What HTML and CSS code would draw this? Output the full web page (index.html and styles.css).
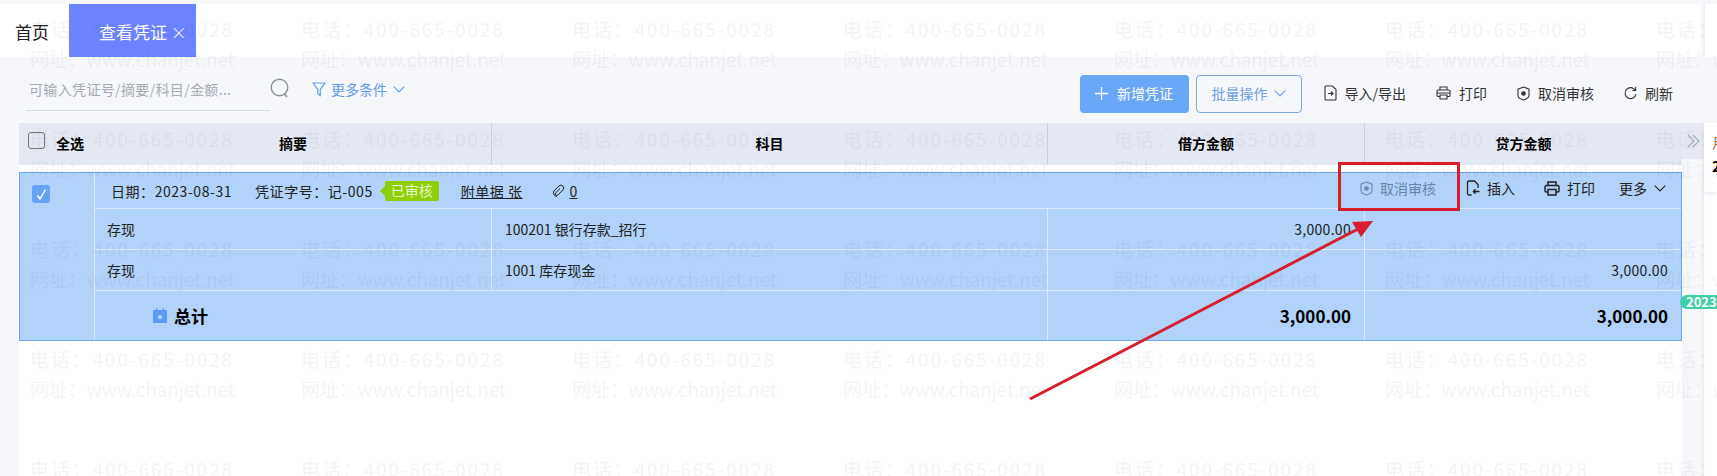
FILE: index.html
```html
<!DOCTYPE html>
<html lang="zh-CN">
<head>
    <meta charset="UTF-8">
    <title>查看凭证</title>
    <link rel="stylesheet" href="styles.css">
</head>
<body>
    <!-- 顶部页签 -->
    <div class="tabs">
        <div class="tab">首页</div>
        <div class="tab tab-active">查看凭证 <span class="tab-close">×</span></div>
    </div>

    <div class="main">
        <div class="content">
            <!-- 搜索和工具栏 -->
            <div class="toolbar">
                <div class="search">可输入凭证号/摘要/科目/金额...</div>
                <svg class="icon-search" viewBox="0 0 20 20" fill="none" stroke="currentColor" stroke-width="1.4"><circle cx="9.5" cy="9.5" r="8.3"/><path d="M14.5 16l2.5 3"/></svg>
                <div class="filter">
                    <svg width="14" height="15" viewBox="0 0 14 15" fill="none" stroke="currentColor" stroke-width="1.2"><path d="M1 1h12L8.3 7.4v6.4L5.7 11.6V7.4z" stroke-linejoin="round"/></svg>
                    <span>更多条件</span>
                    <svg width="12" height="7" viewBox="0 0 12 7" fill="none" stroke="currentColor" stroke-width="1.1"><path d="M.7.7 6 6l5.3-5.3"/></svg>
                </div>
                <div class="actions">
                    <button class="btn btn-primary"><svg width="13" height="13" viewBox="0 0 13 13" stroke="currentColor" stroke-width="1.3"><path d="M6.5 0v13M0 6.5h13"/></svg>新增凭证</button>
                    <button class="btn btn-outline">批量操作<svg width="12" height="7" viewBox="0 0 12 7" fill="none" stroke="currentColor" stroke-width="1.1"><path d="M.7.7 6 6l5.3-5.3"/></svg></button>
                    <div class="links">
                        <span class="link"><svg width="13" height="16" viewBox="0 0 13 16" fill="none" stroke="currentColor" stroke-width="1.1"><path d="M8.5 1H2a1 1 0 0 0-1 1v12a1 1 0 0 0 1 1h9a1 1 0 0 0 1-1V4.5zM4 8.5h5M7 6.5l2 2-2 2"/></svg>导入/导出</span>
                        <span class="link"><svg width="15" height="14" viewBox="0 0 15 14" fill="none" stroke="currentColor" stroke-width="1.1"><path d="M4 4V1h7v3M3.5 10.500H2a1 1 0 0 1-1-1V5a1 1 0 0 1 1-1h11a1 1 0 0 1 1 1v4.500a1 1 0 0 1-1 1h-1.500M1 7h13M4 9h7v4H4z"/></svg>打印</span>
                        <span class="link"><svg width="13" height="15" viewBox="0 0 13 15" fill="none" stroke="currentColor" stroke-width="1.1"><path d="M6.500 1 12 3.200v6.300c0 2-2.400 3.600-5.500 4.500C3.400 13.100 1 11.500 1 9.500V3.200z"/><circle cx="6.500" cy="7.500" r="2.300" fill="currentColor" stroke="none"/></svg>取消审核</span>
                        <span class="link"><svg width="13" height="14" viewBox="0 0 13 14" fill="none" stroke="currentColor" stroke-width="1.1"><path d="M11.300 4.300A5.500 5.500 0 1 0 12 8M11.700 1v3.500H8.300"/></svg>刷新</span>
                    </div>
                </div>
            </div>

            <div class="list">
                <!-- 表头 -->
                <div class="table-head">
                    <div class="head-cell head-check"><span class="checkbox"></span>全选</div>
                    <div class="head-cell">摘要</div>
                    <div class="head-cell">科目</div>
                    <div class="head-cell">借方金额</div>
                    <div class="head-cell">贷方金额</div>
                </div>

                <!-- 选中的凭证 -->
                <div class="voucher">
                    <div class="voucher-check">
                        <span class="checkbox-on"><svg width="11" height="11" viewBox="0 0 11 11" fill="none" stroke="#fff" stroke-width="1.4"><path d="M1.500 6.500 4 10 9.500.500"/></svg></span>
                    </div>
                    <div class="voucher-body">
                        <div class="voucher-head">
                            <span class="head-text">日期：2023-08-31</span>
                            <span class="head-text voucher-no">凭证字号：记-005</span>
                            <span class="tag">已审核</span>
                            <span class="head-text attach">附单据 张</span>
                            <span class="clip"><svg width="14" height="14" viewBox="0 0 14 14" fill="none" stroke="currentColor" stroke-width="1"><path d="M9 4.500 4.700 8.800a1.500 1.500 0 0 0 2.200 2.200l5-5a2.800 2.800 0 0 0-4-4l-5 5a3.800 3.800 0 0 0 3 5.500"/></svg><u>0</u></span>
                            <div class="ops">
                                <span class="op op-muted"><svg width="13" height="15" viewBox="0 0 13 15" fill="none" stroke="currentColor" stroke-width="1.1"><path d="M6.500 1 12 3.200v6.300c0 2-2.400 3.600-5.500 4.500C3.400 13.100 1 11.500 1 9.500V3.200z"/><circle cx="6.500" cy="7.500" r="2.300" fill="currentColor" stroke="none"/></svg>取消审核</span>
                                <span class="op"><svg width="14" height="16" viewBox="0 0 14 16" fill="none" stroke="currentColor" stroke-width="1.3"><path d="M5.500 15H3a1.500 1.500 0 0 1-1.500-1.500v-11A1.500 1.500 0 0 1 3 1h5.500L12 4.500V8M13.500 11.500H7.500M9.500 9.300l-2.200 2.200 2.200 2.200"/></svg>插入</span>
                                <span class="op op-print"><svg width="16" height="15" viewBox="0 0 16 15" fill="none" stroke="currentColor" stroke-width="1.5"><path d="M4 4.500V1h8v3.500M4 11H2.500a1.500 1.500 0 0 1-1.500-1.500V6a1.500 1.500 0 0 1 1.500-1.500h11A1.500 1.500 0 0 1 15 6v3.500a1.500 1.500 0 0 1-1.500 1.500H12M4 8.500h8V14H4z"/></svg>打印</span>
                                <span class="op op-more">更多<svg width="12" height="7" viewBox="0 0 12 7" fill="none" stroke="currentColor" stroke-width="1.1"><path d="M.7.7 6 6l5.300-5.300"/></svg></span>
                            </div>
                        </div>
                        <div class="voucher-row">
                            <div class="cell">存现</div>
                            <div class="cell">100201 银行存款_招行</div>
                            <div class="cell cell-num">3,000.00</div>
                            <div class="cell cell-num"></div>
                        </div>
                        <div class="voucher-row">
                            <div class="cell">存现</div>
                            <div class="cell">1001 库存现金</div>
                            <div class="cell cell-num"></div>
                            <div class="cell cell-num">3,000.00</div>
                        </div>
                        <div class="voucher-row voucher-total">
                            <div class="cell total-label">
                                <svg width="14" height="15" viewBox="0 0 14 15"><path d="M3 0h1.500v2h5V0H11v2h2a1 1 0 0 1 1 1v11a1 1 0 0 1-1 1H1a1 1 0 0 1-1-1V3a1 1 0 0 1 1-1h2z" fill="#5b9df2"/><circle cx="7" cy="9" r="2.300" fill="#a9cdf8"/></svg>
                                总计
                            </div>
                            <div class="cell cell-num">3,000.00</div>
                            <div class="cell cell-num">3,000.00</div>
                        </div>
                    </div>
                </div>
            </div>
        </div>

        <!-- 右侧抽屉 -->
        <div class="side">
            <div class="collapse"><svg width="13" height="14" viewBox="0 0 13 14" fill="none" stroke="currentColor" stroke-width="1.2"><path d="M1 1l6 6-6 6M6 1l6 6-6 6"/></svg></div>
            <div class="panel">
                <div class="panel-title">月份</div>
                <div class="panel-date">2023</div>
            </div>
            <div class="badge">2023</div>
        </div>
    </div>

    <!-- 水印 -->
    <svg class="overlay" width="1717" height="476">
        <defs>
            <pattern id="mark" width="271" height="110" patternUnits="userSpaceOnUse">
                <text x="30" y="37" textLength="202" class="mark-text">电话：400-665-0028</text>
                <text x="30" y="67" textLength="205" class="mark-text">网址：www.chanjet.net</text>
            </pattern>
        </defs>
        <rect width="1717" height="476" fill="url(#mark)"/>
    </svg>

    <!-- 红色标注 -->
    <svg class="overlay" width="1717" height="476">
        <rect x="1339.500" y="163.500" width="119" height="46" fill="none" stroke="#d81e2c" stroke-width="3"/>
        <path d="M1030 399 1358 229" stroke="#d81e2c" stroke-width="3"/>
        <path d="M1373 221 1352 222 1361 237z" fill="#d81e2c"/>
    </svg>
</body>
</html>
```

FILE: styles.css
```css
:root {
    --page-bg: #f5f7fb;
    --head-bg: #e4e8f2;
    --row-bg: #b1d2f9;
    --row-line: #dbe9fb;
    --row-border: #6fa3e6;
    --blue: #5f9ce9;
}

html, body {
    overflow: hidden;
}

body {
    margin: 0;
    width: 1717px;
    height: 476px;
    padding-top: 4px;
    box-sizing: border-box;
    display: flex;
    flex-direction: column;
    background-color: var(--page-bg);
    font-family: "Noto Sans CJK SC", "Noto Sans", sans-serif;
    font-size: 14px;
    color: #222;
}

/* 页签 */
.tabs {
    height: 53px;
    flex: none;
    display: flex;
    background: linear-gradient(to right, #fff 1700px, #eceef3 1705px, #fff 1705px);
    font-size: 17px;
}

.tab {
    padding-left: 15px;
    width: 54px;
    line-height: 55px;
}

.tab-active {
    width: 127px;
    padding-left: 30px;
    box-sizing: border-box;
    background-color: #6b83ff;
    color: #fff;
    white-space: nowrap;
}

.tab-close {
    font-size: 16px;
    font-weight: 300;
}

.main {
    flex: 1;
    min-height: 0;
    display: flex;
}

.content {
    width: 1682px;
    flex: none;
    display: flex;
    flex-direction: column;
}

/* 工具栏 */
.toolbar {
    height: 66px;
    flex: none;
    box-sizing: border-box;
    padding: 18px 9px 0 26px;
    display: flex;
    align-items: flex-start;
}

.search {
    width: 244px;
    height: 36px;
    box-sizing: border-box;
    padding: 0 0 8px 3px;
    display: flex;
    align-items: center;
    border-bottom: 1px solid #d5d9e2;
    color: #a8abb2;
    letter-spacing: 0.35px;
    white-space: nowrap;
}

.icon-search {
    width: 20px;
    height: 20px;
    margin-top: 3px;
    color: #8b9099;
}

.filter {
    margin-left: 22px;
    height: 28px;
    display: flex;
    align-items: center;
    gap: 5px;
    color: var(--blue);
}

.filter span {
    margin-right: 1px;
}

.actions {
    margin-left: auto;
    display: flex;
    gap: 7px;
}

.btn {
    height: 38px;
    padding: 0 0 2px;
    display: flex;
    align-items: center;
    justify-content: center;
    border-radius: 4px;
    font: inherit;
}

.btn-primary {
    width: 109px;
    gap: 9px;
    border: none;
    background-color: #69a7f7;
    color: #fff;
}

.btn-outline {
    width: 106px;
    gap: 6px;
    border: 1px solid #79a9e0;
    background-color: transparent;
    color: #6f9fe0;
}

.links {
    margin-left: 15px;
    height: 36px;
    display: flex;
    align-items: center;
    gap: 30px;
}

.link {
    display: flex;
    align-items: center;
    gap: 8px;
    color: #333;
}

/* 列表 */
.list {
    flex: 1;
    margin-left: 19px;
    background-color: #fff;
}

.table-head {
    height: 42px;
    display: grid;
    grid-template-columns: 76px 396px 556px 317px 318px;
    background-color: var(--head-bg);
    font-weight: 700;
    color: #000;
}

.head-cell {
    display: flex;
    align-items: center;
    justify-content: center;
    padding-bottom: 3px;
    border-left: 1px solid #c9ced8;
}

.head-cell:nth-child(2) {
    border-left: none;
}

.head-check {
    border-left: none;
    justify-content: flex-start;
    padding-left: 9px;
    gap: 11px;
}

.checkbox {
    width: 17px;
    height: 17px;
    box-sizing: border-box;
    margin-top: -4px;
    border: 1px solid #777;
    border-radius: 3px;
}

.voucher {
    margin-top: 7px;
    height: 169px;
    box-sizing: border-box;
    display: flex;
    border: 1px solid var(--row-border);
    background-color: var(--row-bg);
}

.voucher-check {
    width: 75px;
    flex: none;
    box-sizing: border-box;
    padding: 12px 0 0 12px;
    border-right: 1px solid var(--row-line);
}

.checkbox-on {
    width: 18px;
    height: 18px;
    display: flex;
    align-items: center;
    justify-content: center;
    border-radius: 3px;
    background-color: #66a3f5;
}

.voucher-body {
    flex: 1;
    display: flex;
    flex-direction: column;
}

.voucher-head {
    height: 36px;
    flex: none;
    box-sizing: border-box;
    padding: 0 15px 0 16px;
    display: flex;
    align-items: center;
    border-bottom: 1px solid var(--row-line);
    white-space: nowrap;
}

.head-text {
    letter-spacing: 0.55px;
}

.voucher-no {
    margin-left: 23px;
}

.tag {
    position: relative;
    margin-left: 12px;
    width: 54px;
    height: 20px;
    text-align: center;
    line-height: 19px;
    border-radius: 2px;
    background-color: #8fcf0a;
    color: #e8f6c6;
}

.tag::before {
    content: '';
    position: absolute;
    left: -5px;
    top: 5px;
    border-top: 5px solid transparent;
    border-bottom: 5px solid transparent;
    border-right: 5px solid #8fcf0a;
}

.attach {
    margin-left: 22px;
    text-decoration: underline;
}

.clip {
    margin-left: 28px;
    display: flex;
    align-items: center;
    gap: 5px;
}

.ops {
    margin-left: auto;
    display: flex;
    align-items: center;
    gap: 30px;
    margin-top: -5px;
}

.op {
    display: flex;
    align-items: center;
    gap: 7px;
}

.op-muted {
    color: #6586ad;
}

.op-print {
    margin-left: -1px;
}

.op-more {
    margin-left: -6px;
}

.voucher-row {
    height: 41px;
    flex: none;
    display: grid;
    grid-template-columns: 396px 556px 317px 1fr;
    box-sizing: border-box;
    border-bottom: 1px solid var(--row-line);
}

.voucher-total {
    flex: 1;
    grid-template-columns: 952px 317px 1fr;
    border-bottom: none;
}

.cell {
    display: flex;
    align-items: center;
    padding: 0 13px;
    border-left: 1px solid var(--row-line);
}

.cell:first-child {
    border-left: none;
    padding-left: 12px;
}

.cell-num {
    justify-content: flex-end;
    letter-spacing: 0.3px;
}

.voucher-total .cell {
    font-size: 17px;
    font-weight: 700;
    letter-spacing: 0;
    color: #000;
}

.total-label {
    gap: 7px;
}

.voucher-total .total-label {
    padding-left: 58px;
}

/* 右侧抽屉 */
.side {
    flex: 1;
    position: relative;
    margin-top: 66px;
    display: flex;
    align-items: flex-start;
    min-width: 0;
    background: linear-gradient(to right, var(--page-bg) 18px, #eaecf2 22px, #fff 22px);
}

.collapse {
    width: 22px;
    height: 36px;
    flex: none;
    display: flex;
    align-items: center;
    justify-content: center;
    background-color: #e6e9f3;
    color: #a9aebb;
}

.panel {
    flex: 1;
    min-width: 0;
    height: 69px;
    padding-left: 8px;
    overflow: hidden;
    white-space: nowrap;
    background-color: #fff;
    box-shadow: 0 2px 4px rgba(0, 0, 0, 0.08);
}

.panel-title {
    margin-top: 8px;
    line-height: 22px;
    color: #a8642a;
}

.panel-date {
    margin-top: 4px;
    line-height: 18px;
    font-weight: 700;
    color: #000;
}

.badge {
    position: absolute;
    left: -2px;
    top: 172px;
    width: 50px;
    height: 14px;
    padding-left: 6px;
    line-height: 13px;
    border-radius: 7px;
    background-color: #3ecfa9;
    color: #fff;
    font-weight: 700;
    font-size: 13px;
}

/* 水印和标注 */
.overlay {
    position: absolute;
    left: 0;
    top: 0;
    pointer-events: none;
}

.mark-text {
    font-family: "Noto Sans CJK SC", sans-serif;
    font-size: 19px;
    fill: #000;
    fill-opacity: 0.045;
}
```
